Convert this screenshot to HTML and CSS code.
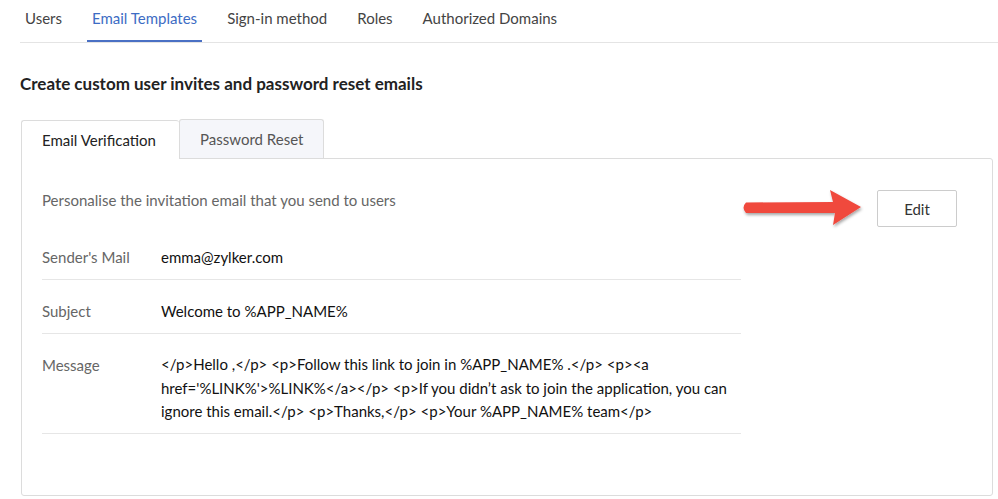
FILE: index.html
```html
<!DOCTYPE html>
<html lang="en">
<head>
    <meta charset="UTF-8">
    <title>Email Templates</title>
    <link rel="stylesheet" href="styles.css">
</head>
<body>

<div class="nav">
    <div class="nav-item">Users</div>
    <div class="nav-item active">Email Templates</div>
    <div class="nav-item">Sign-in method</div>
    <div class="nav-item">Roles</div>
    <div class="nav-item">Authorized Domains</div>
</div>

<h2 class="title">Create custom user invites and password reset emails</h2>

<div class="tabs">
    <div class="tab active">Email Verification</div>
    <div class="tab">Password Reset</div>
</div>

<div class="panel">
    <div class="panel-head">
        <div class="desc">Personalise the invitation email that you send to users</div>
        <div class="edit-wrap">
            <svg class="arrow" width="130" height="50" viewBox="0 0 130 50">
                <defs>
                    <filter id="sh" x="-10%" y="-30%" width="130%" height="170%">
                        <feDropShadow dx="1" dy="2" stdDeviation="1.5" flood-color="#000" flood-opacity="0.35"/>
                    </filter>
                </defs>
                <g filter="url(#sh)" fill="#f0483e">
                    <path d="M6 19.5 L93 19 L90 7 L121 24 L93 42 L95 30 L6 30 Q1 24.5 6 19.5 Z"/>
                </g>
            </svg>
            <button class="edit-btn">Edit</button>
        </div>
    </div>

    <div class="rows">
        <div class="row">
            <div class="label">Sender's Mail</div>
            <div class="value">emma@zylker.com</div>
        </div>
        <div class="row">
            <div class="label">Subject</div>
            <div class="value">Welcome to %APP_NAME%</div>
        </div>
        <div class="row">
            <div class="label">Message</div>
            <div class="value msg">&lt;/p&gt;Hello ,&lt;/p&gt; &lt;p&gt;Follow this link to join in %APP_NAME% .&lt;/p&gt; &lt;p&gt;&lt;a href='%LINK%'&gt;%LINK%&lt;/a&gt;&lt;/p&gt; &lt;p&gt;If you didn’t ask to join the application, you can ignore this email.&lt;/p&gt; &lt;p&gt;Thanks,&lt;/p&gt; &lt;p&gt;Your %APP_NAME% team&lt;/p&gt;</div>
        </div>
    </div>
</div>

</body>
</html>
```

FILE: styles.css
```css
body {
    margin: 0;
    padding: 0 5px 0 20px;
    font-family: Lato, "Open Sans", sans-serif;
    color: #222;
    background-color: #fff;
}
.nav {
    display: flex;
    border-bottom: 1px solid #e4e4e4;
    height: 42px;
    margin-right: -5px;
}
.nav-item {
    padding: 9px 15px 0 5px;
    margin-right: 10px;
    font-size: 15px;
    color: #444;
    height: 31px;
}
.nav-item.active {
    color: #3d6cc4;
    border-bottom: 2px solid #4a70c4;
    padding: 9px 5px 0 5px;
    margin-right: 20px;
}
.title {
    margin: 30px 0 0 0;
    font-size: 17px;
    font-weight: bold;
    color: #222;
    height: 46px;
}
.tabs {
    display: flex;
    margin-left: 1px;
}
.tab {
    font-size: 15px;
    padding: 10px 20px 0 20px;
    height: 28px;
    border: 1px solid #dcdcdc;
    border-bottom: none;
    border-radius: 3px 3px 0 0;
    background-color: #f5f6fa;
    color: #555;
}
.tab.active {
    background-color: #fff;
    color: #222;
    border-right: none;
    position: relative;
    top: 1px;
    width: 117px;
}
.panel {
    border: 1px solid #dcdcdc;
    border-radius: 0 3px 3px 3px;
    height: 336px;
    margin-left: 1px;
    padding: 0 20px;
}
.panel-head {
    display: flex;
    justify-content: space-between;
    padding-top: 31px;
    height: 36px;
}
.desc {
    font-size: 15px;
    color: #666;
    margin-top: 1px;
}
.edit-wrap {
    display: flex;
    align-items: flex-start;
    margin-right: 15px;
}
.arrow {
    margin: -7px 7px 0 0;
}
.edit-btn {
    width: 80px;
    height: 37px;
    border: 1px solid #ccc;
    border-radius: 2px;
    background-color: #fff;
    font-family: Lato, sans-serif;
    font-size: 15px;
    color: #333;
}
.rows {
    width: 699px;
}
.row {
    display: flex;
    border-bottom: 1px solid #e6e6e6;
    padding: 22px 0 13px 0;
    font-size: 15px;
}
.label {
    width: 119px;
    color: #666;
    flex-shrink: 0;
}
.value {
    color: #111;
}
.value.msg {
    line-height: 23.5px;
    margin-top: -3px;
    margin-bottom: -4px;
}
```
